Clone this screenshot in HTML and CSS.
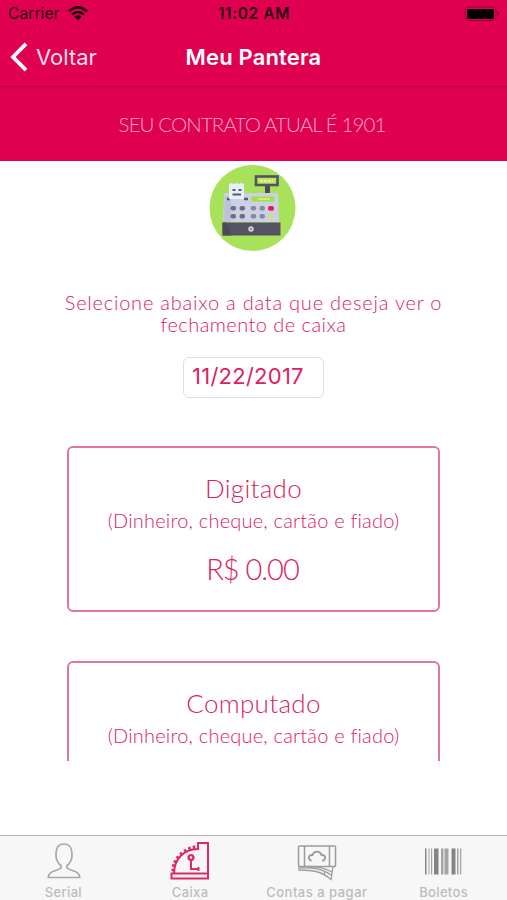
FILE: index.html
```
<!DOCTYPE html>
<html lang="pt-BR">
<head>
    <meta charset="UTF-8">
    <title>Meu Pantera</title>
    <link rel="stylesheet" href="styles.css">
</head>
<body>
    <div class="app">
        <header class="header">
            <div class="status">
                <div class="carrier">
                    <span>Carrier</span>
                    <svg width="20" height="15" viewBox="0 0 20 15" fill="none" stroke="#1b0009" stroke-width="2.6">
                        <path d="M1 5.2Q10-2.8 19 5.2M4.1 8.6Q10 3.4 15.9 8.6"/>
                        <path d="M6.3 10.6Q10 7.6 13.7 10.6L10 14.4Z" fill="#1b0009" stroke="none"/>
                    </svg>
                </div>
                <div class="clock">11:02 AM</div>
                <svg class="battery" width="36" height="16" viewBox="0 0 36 16">
                    <rect x="1" y="1" width="31" height="13.5" rx="3" fill="none" stroke="#9b003a"/>
                    <rect x="3" y="3" width="27" height="10" rx="1" fill="#000"/>
                    <path d="M33.5 5.5q3 2.2 0 4.5z" fill="#6b0029"/>
                </svg>
            </div>
            <nav class="navbar">
                <a class="back">
                    <svg width="18" height="30" viewBox="0 0 18 30" fill="none" stroke="#fff" stroke-width="3.8">
                        <path d="M16 1.8L3 15L16 28.2"/>
                    </svg>
                    <span>Voltar</span>
                </a>
                <h1>Meu Pantera</h1>
            </nav>
        </header>
        <div class="contract">SEU CONTRATO ATUAL É 1901</div>

        <main class="content">
            <svg class="register" width="87" height="87" viewBox="0 0 87 87">
                <circle cx="43.5" cy="43" r="43" fill="#a8e25b"/>
                <path d="M56 20h5v11h-5z" fill="#4d4a5c"/>
                <rect x="47" y="11.5" width="21.5" height="8.5" fill="#b9e66b" stroke="#55535f" stroke-width="2.6"/>
                <path d="M51 16h13" stroke="#e3f58e" stroke-width="2.2" stroke-dasharray="3 1"/>
                <path d="M17 28h50q2 0 2 2l1 27H14l1-27q0-2 2-2z" fill="#cbd0e3"/>
                <path d="M16 31h6v26h-7z" fill="#bcc2d9"/>
                <path d="M18 34h3M35 34h4" stroke="#555b77" stroke-width="2.5"/>
                <path d="M20 19l2.5-1 2.5 1 2.5-1 2.5 1 2.5-1 2.5 1v15H20z" fill="#e8effb"/>
                <path d="M23.5 25h3M29.5 25h3M23.5 29.5h8.5" stroke="#555b77" stroke-width="2"/>
                <rect x="42.5" y="31.5" width="23" height="5" fill="#a3de4e"/>
                <path d="M49 34h12" stroke="#d5f275" stroke-width="1.7"/>
                <g fill="#696d85">
                    <rect x="21.5" y="41" width="5.5" height="4.6" rx="2"/>
                    <rect x="30.5" y="41" width="5.5" height="4.6" rx="2"/>
                    <rect x="21.5" y="49" width="5.5" height="4.6" rx="2"/>
                    <rect x="30.5" y="49" width="5.5" height="4.6" rx="2"/>
                </g>
                <g fill="#8389a3">
                    <rect x="41.7" y="41" width="5.5" height="4.6" rx="2"/>
                    <rect x="50.5" y="41" width="5.5" height="4.6" rx="2"/>
                    <rect x="41.7" y="49" width="5.5" height="4.6" rx="2"/>
                    <rect x="50.5" y="49" width="5.5" height="4.6" rx="2"/>
                </g>
                <rect x="59" y="41" width="6" height="4.8" rx="2" fill="#ec174e"/>
                <rect x="59.5" y="49" width="5" height="4.6" rx="2" fill="#c3ea68"/>
                <path d="M13.5 57.5h58v13h-58z" fill="#555362"/>
                <path d="M13.5 57.5h4l5 13h-9z" fill="#4b495a"/>
                <circle cx="42" cy="64" r="2.7" fill="#d4d5df"/>
                <circle cx="42" cy="64" r="1" fill="#777583"/>
            </svg>
            <p class="hint">Selecione abaixo a data que deseja ver o<br><span>fechamento de caixa</span></p>
            <div class="date">11/22/2017</div>

            <div class="cards">
                <section class="card">
                    <h2>Digitado</h2>
                    <p class="types">(Dinheiro, cheque, cartão e fiado)</p>
                    <p class="value">R$ 0.00</p>
                </section>
                <section class="card">
                    <h2>Computado</h2>
                    <p class="types">(Dinheiro, cheque, cartão e fiado)</p>
                </section>
            </div>
        </main>

        <footer class="tabs">
            <a class="tab">
                <svg class="person" width="40" height="40" viewBox="0 0 40 40" fill="none" stroke="#a9a9a9" stroke-width="1.7" stroke-linejoin="round">
                    <path d="M17 24.5c-3-2.3-5-6-5-10C12 6.5 14 3 20 3s8 3.5 8 11.5c0 4-2 7.7-5 10-1.2 3.5 3 4 7 5.5 3.5 1.200 5.500 3.500 5.800 6.500H4.200c.3-3 2.300-5.300 5.800-6.500 4-1.500 8.200-2 7-5.500z"/>
                </svg>
                <span>Serial</span>
            </a>
            <a class="tab">
                <svg width="40" height="40" viewBox="0 0 40 40" fill="none" stroke="#df2867" stroke-width="2">
                    <path d="M1.5 32.5H38v5H1.5zM4 32C4.500 18 13 8.500 28 8V2h10v30.500"/>
                    <path d="M1.500 29h3M2 24.500h3M3.800 20l3 1.500M6.500 15.500l2.700 2.200M10.200 11.500l2.200 2.700M14.500 8.300l1.700 3.200M19 6l1 3.300M24 4.500v3.500" stroke-width="2.6"/>
                    <circle cx="21" cy="16.5" r="2.4" stroke-width="2.4"/>
                    <path d="M21 18v10h7.500M28.500 26v4"/>
                </svg>
                <span>Caixa</span>
            </a>
            <a class="tab">
                <svg width="40" height="40" viewBox="0 0 40 40" fill="none" stroke="#9c9c9c" stroke-width="1.5">
                    <rect x="1.5" y="5" width="37" height="20.5" rx="1"/>
                    <path d="M7.500 5v20.500M32.500 5v20.500"/>
                    <path d="M14.500 19.500h-1c-3-2.500-1.500-6 2-5.500 1.500-4.500 7.500-4.500 9 0 3.500-.5 5 3 2 5.500h-1.500" stroke-width="1.9"/>
                    <path d="M2 25.500v3.500c14 0 23 1.500 32 9.500l2-13M3 27c13-.5 22 .5 31 7M11 25.500c10 0 18 2 24 5.500M28 30l-1 4" stroke-width="1.3"/>
                </svg>
                <span class="contas">Contas a pagar</span>
            </a>
            <a class="tab">
                <svg width="40" height="40" viewBox="0 0 40 40">
                    <path d="M1 7.500h1.500v26H1zM10 7.500h4.500v26H10zM27.500 7.500h4v26h-4z" fill="#858585"/>
                    <path d="M4.500 7.500h1v26h-1zM7 7.500h1.200v26H7zM17 7.500h2.500v26H17zM20.500 7.500h4v26h-4zM33 7.500h1.500v26H33zM36 7.500h1.300v26H36z" fill="#a4a4a4"/>
                </svg>
                <span>Boletos</span>
            </a>
        </footer>
    </div>
</body>
</html>
```
FILE: styles.css
```
* {
    box-sizing: border-box;
}
body {
    margin: 0;
    background: #fff;
    color: #d92362;
    font-family: Lato, sans-serif;
}
h1, h2, p {
    margin: 0;
}
svg {
    display: block;
    flex-shrink: 0;
}
.app {
    display: flex;
    flex-direction: column;
    height: 900px;
    overflow: hidden;
}

.header {
    height: 87px;
    background: #e00050;
    border-bottom: 1px solid #b90043;
    font-family: Inter, sans-serif;
}
.status {
    display: grid;
    grid-template-columns: 1fr auto 1fr;
    align-items: center;
    height: 27px;
    padding: 0 7px 0 8px;
    color: #2c0010;
    font-size: 15.5px;
}
.carrier {
    display: flex;
    align-items: center;
    gap: 8px;
    letter-spacing: 0.1px;
}
.clock {
    font-weight: 600;
    letter-spacing: 0.6px;
}
.battery {
    justify-self: end;
}
.navbar {
    display: grid;
    grid-template-columns: 1fr auto 1fr;
    align-items: center;
    height: 59px;
    padding: 0 10px;
    color: #fff;
}
.back {
    display: flex;
    align-items: center;
    gap: 8px;
    font-size: 22px;
    color: #ffdce8;
}
.navbar h1 {
    font-size: 22px;
    font-weight: 600;
    letter-spacing: 0.15px;
}

.contract {
    display: flex;
    align-items: center;
    justify-content: center;
    height: 74px;
    padding-right: 3px;
    background: #e00050;
    color: #ffa6c5;
    font-size: 20.5px;
    font-weight: 300;
    letter-spacing: -0.9px;
}

.content {
    display: flex;
    flex-direction: column;
    align-items: center;
    height: 674px;
    padding-top: 4px;
}
.register {
    margin-right: 2px;
}
.hint {
    margin-top: 39px;
    text-align: center;
    font-size: 20px;
    line-height: 22px;
    font-weight: 300;
    letter-spacing: 0.77px;
    white-space: nowrap;
}
.hint span {
    letter-spacing: 0.45px;
}
.date {
    width: 141px;
    height: 41px;
    margin-top: 22px;
    padding-left: 8px;
    border: 1.5px solid #dedede;
    border-radius: 6px;
    font: 22px/37px Inter, sans-serif;
    letter-spacing: 0.25px;
}
.cards {
    display: flex;
    flex-direction: column;
    gap: 49px;
    width: 373px;
    height: 315px;
    margin-top: 48px;
    overflow: hidden;
}
.card {
    flex: none;
    height: 166px;
    padding-top: 24px;
    border: 2px solid #e2759c;
    border-radius: 6px;
    text-align: center;
    font-weight: 300;
    white-space: nowrap;
}
.card h2 {
    font-size: 26px;
    line-height: 32px;
    font-weight: 300;
    letter-spacing: 0.3px;
}
.types {
    margin-top: 3px;
    font-size: 20px;
    line-height: 26px;
    letter-spacing: 0.2px;
}
.value {
    margin-top: 18px;
    padding-right: 2px;
    font-size: 29px;
    line-height: 36px;
    letter-spacing: -1px;
}

.tabs {
    display: grid;
    grid-template-columns: repeat(4, 1fr);
    height: 65px;
    border-top: 1px solid #b4b4b4;
    background: #f7f7f7;
}
.tab {
    display: flex;
    flex-direction: column;
    align-items: center;
    padding-top: 5px;
    color: #bcbcbc;
    font: 500 13px/15px Inter, sans-serif;
    letter-spacing: 0.35px;
}
.tab span {
    margin-top: 4px;
}
.tab .person {
    margin-left: 2px;
}
.tab .contas {
    letter-spacing: 0.5px;
}
```
